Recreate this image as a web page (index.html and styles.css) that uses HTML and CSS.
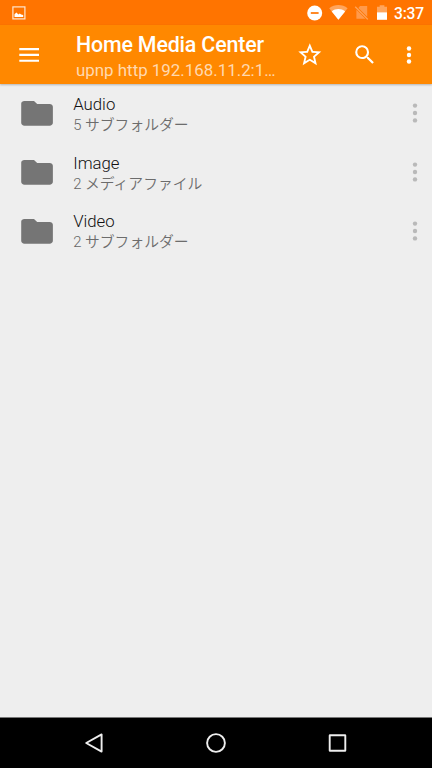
FILE: index.html
```html
<!DOCTYPE html>
<html lang="ja">
<head>
<meta charset="utf-8">
<title>Home Media Center</title>
<link rel="stylesheet" href="styles.css">
</head>
<body>
<div class="screen">
  <div class="status">
    <svg class="status-picture" width="14" height="14" viewBox="0 0 14 14"><rect x=".9" y=".9" width="12" height="12" fill="none" stroke="#ffe6cf" stroke-width="1.2"/><path d="M2.5 11V8.2L4.4 6.6l2 1.9 1.3-1.1 1.5 1 2 .6V11z" fill="#fff"/></svg>
    <svg class="status-icons" width="80" height="25" viewBox="307 0 80 25">
      <circle cx="314.7" cy="13" r="7.5" fill="#fff"/><path d="M310.8 13h7.8" stroke="#ff7400" stroke-width="1.7"/>
      <path d="M329.2 8.3C334.5 4 342.3 4 347.6 8.3L338.4 19.7z" fill="#ffa55c"/>
      <path d="M331.7 11.4C335.5 8.2 341.3 8.2 345.1 11.4L338.4 19.7z" fill="#fff"/>
      <path d="M360 6h7.2v10.8L358.4 8zM356.4 9.8l9 9h-9z" fill="#ff9a4c"/><path d="M355.2 6.8l12.6 12.6" stroke="#ffa55c" stroke-width="1.3"/>
      <path d="M377 6.7h2.7V5.2h4.7v1.5h2.6V13h-10z" fill="#ffa55c"/><path d="M377 12.4h10v7.4h-10z" fill="#fff"/>
    </svg>
    <span class="clock">3:37</span>
  </div>
  <header class="appbar">
    <svg class="menu" width="20" height="16" viewBox="0 0 20 16"><path d="M.3 2.1H20M.3 7.9H20M.3 13.7H20" stroke="#fff" stroke-width="2.1"/></svg>
    <div class="heading">
      <h1>Home Media Center</h1>
      <p>upnp http 192.168.11.2:1…</p>
    </div>
    <svg class="star" width="27.6" height="27.6" viewBox="0 0 24 24"><path fill="#fff" d="M22 9.24l-7.19-.62L12 2 9.19 8.63 2 9.24l5.46 4.73L5.82 21 12 17.27 18.18 21l-1.63-7.03L22 9.24zM12 15.4l-3.76 2.27 1-4.28-3.32-2.88 4.38-.38L12 6.1l1.71 4.04 4.38.38-3.32 2.88 1 4.28L12 15.4z"/></svg>
    <svg class="search" width="25.6" height="25.6" viewBox="0 0 24 24"><path fill="#fff" d="M15.5 14h-.79l-.28-.27A6.471 6.471 0 0 0 16 9.5 6.5 6.5 0 1 0 9.5 16c1.61 0 3.09-.59 4.23-1.57l.27.28v.79l5 4.99L20.49 19l-4.99-5zm-6 0C7.01 14 5 11.99 5 9.5S7.01 5 9.5 5 14 7.01 14 9.5 11.99 14 9.5 14z"/></svg>
    <svg class="overflow" width="6" height="20" viewBox="0 0 6 20"><g fill="#fff"><circle cx="3" cy="3.5" r="2.2"/><circle cx="3" cy="10" r="2.2"/><circle cx="3" cy="16.5" r="2.2"/></g></svg>
  </header>
  <main class="list">
    <div class="row">
      <svg class="folder" width="38.4" height="38.4" viewBox="0 0 24 24"><path d="M10 4.3H4c-1.1 0-1.99.7-1.99 1.7L2 18c0 1.1.9 1.8 2 1.8h15.8c1.1 0 2-.7 2-1.8V8c0-1.1-.9-1.8-2-1.8h-7.8l-2-1.9z"/></svg>
      <div class="label"><h2>Audio</h2><p>5 <span class="kana">サブフォルダー</span></p></div>
      <svg class="more" width="6" height="20" viewBox="0 0 6 20"><circle cx="3" cy="2.6" r="2.2"/><circle cx="3" cy="10" r="2.2"/><circle cx="3" cy="17.4" r="2.2"/></svg>
    </div>
    <div class="row">
      <svg class="folder" width="38.4" height="38.4" viewBox="0 0 24 24"><path d="M10 4.3H4c-1.1 0-1.99.7-1.99 1.7L2 18c0 1.1.9 1.8 2 1.8h15.8c1.1 0 2-.7 2-1.8V8c0-1.1-.9-1.8-2-1.8h-7.8l-2-1.9z"/></svg>
      <div class="label"><h2>Image</h2><p>2 <span class="kana">メディアファイル</span></p></div>
      <svg class="more" width="6" height="20" viewBox="0 0 6 20"><circle cx="3" cy="2.6" r="2.2"/><circle cx="3" cy="10" r="2.2"/><circle cx="3" cy="17.4" r="2.2"/></svg>
    </div>
    <div class="row">
      <svg class="folder" width="38.4" height="38.4" viewBox="0 0 24 24"><path d="M10 4.3H4c-1.1 0-1.99.7-1.99 1.7L2 18c0 1.1.9 1.8 2 1.8h15.8c1.1 0 2-.7 2-1.8V8c0-1.1-.9-1.8-2-1.8h-7.8l-2-1.9z"/></svg>
      <div class="label"><h2>Video</h2><p>2 <span class="kana">サブフォルダー</span></p></div>
      <svg class="more" width="6" height="20" viewBox="0 0 6 20"><circle cx="3" cy="2.6" r="2.2"/><circle cx="3" cy="10" r="2.2"/><circle cx="3" cy="17.4" r="2.2"/></svg>
    </div>
  </main>
  <nav class="navbar">
    <svg width="22" height="22" viewBox="0 0 22 22"><path d="M17.6 2.4v17.2L2.2 11z"/></svg>
    <svg width="22" height="22" viewBox="0 0 22 22"><circle cx="11" cy="11" r="8.9"/></svg>
    <svg width="22" height="22" viewBox="0 0 22 22"><rect x="2.7" y="3.2" width="15.6" height="15.6" rx=".3"/></svg>
  </nav>
</div>
</body>
</html>
```

FILE: styles.css
```css
* { box-sizing: border-box; }
body { margin: 0; font-family: Roboto, "Noto Sans CJK JP", sans-serif; }
h1, h2, p { margin: 0; }
svg { display: block; flex: none; }
.screen { width: 432px; height: 768px; display: flex; flex-direction: column; background: #eee; overflow: hidden; }
.status { height: 25px; flex: none; display: flex; align-items: center; background: #ff7400; color: #fff; }
.status-picture { margin-left: 12px; }
.status-icons { margin-left: 281px; }
.clock { margin-left: 7px; padding-top: 2px; font-size: 15.6px; font-weight: 500; line-height: 20px; letter-spacing: -.2px; }
.appbar { height: 59px; flex: none; display: flex; align-items: center; background: #ff8800; color: #fff; box-shadow: 0 1px 2px rgba(0, 0, 0, .25); }
.menu { margin-left: 19px; }
.heading { width: 220px; margin-left: 37px; padding-top: 4px; white-space: nowrap; }
.heading h1 { font-size: 21.4px; font-weight: 500; line-height: 27px; letter-spacing: -.17px; }
.heading p { font-size: 16.9px; line-height: 25px; color: #ffd9b0; }
.star { margin-top: 1px; }
.search { margin-left: 28px; }
.overflow { margin-left: 28.6px; }
.list { flex: 1; }
.row { height: 58.8px; display: flex; align-items: center; }
.folder { margin-left: 17.6px; fill: #757575; }
.label { width: 330px; margin-left: 17.2px; padding-top: 3px; }
.label h2 { font-size: 16.8px; font-weight: 300; line-height: 21px; color: #111; }
.label p { font-size: 14.8px; font-weight: 300; line-height: 21px; color: #666; }
.kana { font-weight: 350; color: #6c6c6c; }
.more { margin-left: 8.8px; fill: #b9b9b9; }
.navbar { height: 51px; flex: none; display: flex; align-items: center; justify-content: center; gap: 99.5px; border-top: 1px solid #777; background: #000; }
.navbar svg { fill: none; stroke: #eee; stroke-width: 1.9; stroke-linejoin: round; }
```
